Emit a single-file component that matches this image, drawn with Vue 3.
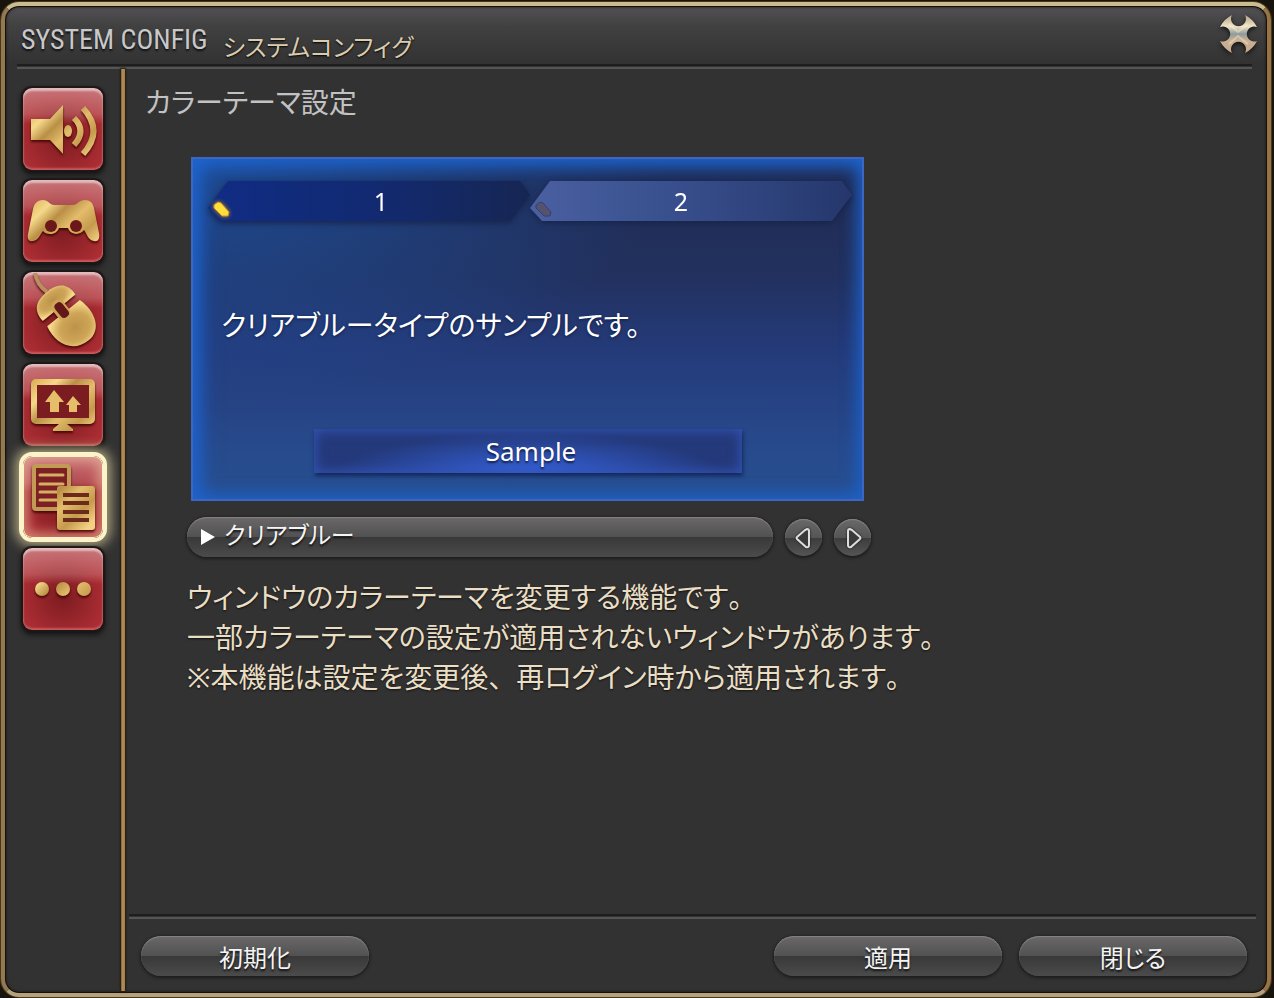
<template>
  <div class="screen">
    <main class="window">
      <header class="titlebar">
        <h1>SYSTEM CONFIG</h1>
        <p class="subtitle">システムコンフィグ</p>
        <button class="close" type="button" aria-label="閉じる">
          <svg viewBox="0 0 40 40" aria-hidden="true">
            <defs>
              <linearGradient id="steel" x1="0" y1="0" x2="0" y2="1">
                <stop offset="0" stop-color="#b5a28c" />
                <stop offset="0.3" stop-color="#efe3c4" />
                <stop offset="0.5" stop-color="#8f9a9c" />
                <stop offset="0.66" stop-color="#c9b094" />
                <stop offset="1" stop-color="#c8aa8c" />
              </linearGradient>
            </defs>
            <path
              fill="url(#steel)"
              d="M13 1 A7.5 7.5 0 1 0 26 1 Q34 5 38 13 A7.5 7.5 0 1 0 38 27 Q34 35 26 39 A7.5 7.5 0 1 0 13 39 Q5 35 1 27 A7.5 7.5 0 1 0 1 13 Q5 5 13 1Z"
            />
            <path d="M10 10L19 18L29 10M10 30L19 22L29 30" fill="none" stroke="#fff2d2" stroke-opacity="0.4" stroke-width="2" />
          </svg>
        </button>
      </header>
      <div class="rule"></div>

      <div class="body">
        <nav class="sidebar">
          <button
            v-for="item in menu"
            :key="item.id"
            type="button"
            class="menu-button"
            :class="{ active: item.id === current }"
            :aria-label="item.label"
            @click="current = item.id"
          >
            <svg class="icon" viewBox="0 0 80 82" aria-hidden="true">
              <defs>
                <linearGradient :id="'gold-' + item.id" gradientUnits="userSpaceOnUse" x1="10" y1="12" x2="66" y2="70">
                  <stop offset="0" stop-color="#d9a94f" />
                  <stop offset="0.25" stop-color="#f5d98a" />
                  <stop offset="0.42" stop-color="#b98f45" />
                  <stop offset="0.6" stop-color="#e3bd6c" />
                  <stop offset="0.8" stop-color="#c59a4c" />
                  <stop offset="1" stop-color="#f3d184" />
                </linearGradient>
                <radialGradient id="shell" cx="0.5" cy="0.5" r="0.6">
                  <stop offset="0" stop-color="#bb9248" />
                  <stop offset="0.6" stop-color="#cfa658" />
                  <stop offset="1" stop-color="#f6d98a" />
                </radialGradient>
              </defs>

              <g v-if="item.id === 'sound'" :fill="gold(item)">
                <path d="M8 31H27L40 17V66L27 52H8Z" />
                <ellipse cx="45" cy="43" rx="4" ry="6" />
                <g fill="none" :stroke="gold(item)" stroke-width="6">
                  <path d="M51 30Q64 43 51 57" />
                  <path d="M60 20Q81 43 60 66" />
                </g>
              </g>

              <g v-else-if="item.id === 'pad'">
                <path
                  :fill="gold(item)"
                  d="M20 20C25 20 27 25 31 25H50C54 25 56 20 62 20C67 20 70 23 71 28L76 53C77 59 75 62 71 61C65 60 64 54 61 50C58 55 48 56 45 48H36C33 56 23 55 20 51C17 54 16 60 10 61C6 62 4 59 5 54L10 29C11 24 14 20 20 20Z"
                />
                <circle cx="28" cy="46" r="6" fill="#6c1719" />
                <circle cx="53" cy="46" r="6" fill="#6c1719" />
              </g>

              <g v-else-if="item.id === 'mouse'">
                <path d="M12 1Q14 13 24 20" fill="none" stroke="#ba8f62" stroke-width="4" />
                <g transform="translate(38 38) rotate(-39)">
                  <path d="M-21 -3C-22 -18 -13 -23 0 -23S22 -18 21 -3Z" fill="url(#shell)" />
                  <path d="M-21 4H21C26 22 20 41 2 41C-18 41 -26 22 -21 4Z" fill="url(#shell)" />
                  <rect x="-7" y="-11" width="14" height="22" rx="7" fill="#cfa658" />
                  <rect x="-4" y="-8" width="9" height="17" rx="4" fill="#631718" />
                </g>
              </g>

              <g v-else-if="item.id === 'display'">
                <rect x="11" y="18" width="58" height="39" rx="2" fill="#7b1d20" :stroke="gold(item)" stroke-width="6" />
                <path d="M36 60H44L50 65V67H30V65Z" :fill="gold(item)" />
                <path d="M31 26L41 38H36V48H27V38H22Z" fill="#e6be6a" />
                <path d="M50 32L58 41H54V48H46V41H43Z" fill="#e6be6a" />
              </g>

              <g v-else-if="item.id === 'theme'">
                <rect x="11" y="10" width="35" height="43" rx="2" fill="#7d2023" stroke="#c39a55" stroke-width="4" />
                <path d="M17 19H40M17 28H40M17 36H40M17 44H40" fill="none" stroke="#d6ae64" stroke-width="3" stroke-linecap="round" />
                <rect x="34" y="30" width="38" height="44" rx="3" :fill="gold(item)" />
                <path d="M40 39H66M40 47H66M40 56H66M40 64H66" stroke="#6b2a1c" stroke-width="4" />
              </g>

              <g v-else :fill="gold(item)">
                <circle cx="19" cy="41" r="7" />
                <circle cx="40" cy="41" r="7" />
                <circle cx="61" cy="41" r="7" />
              </g>
            </svg>
          </button>
        </nav>

        <div class="divider"></div>

        <div class="content">
          <section class="settings">
            <h2>カラーテーマ設定</h2>

            <div class="theme">
              <div class="preview">
                <div class="tabs">
                  <button
                    v-for="n in 2"
                    :key="n"
                    type="button"
                    class="tab"
                    :class="{ selected: n === tab }"
                    @click="tab = n"
                  >
                    <span class="tab-face">{{ n }}</span>
                    <svg class="gem" viewBox="0 0 20 18" aria-hidden="true">
                      <path d="M2 5L6 2L9 3L17 12L16 16H10L2 8Z" />
                    </svg>
                  </button>
                </div>
                <p class="message">クリアブルータイプのサンプルです。</p>
                <button class="sample" type="button">Sample</button>
              </div>

              <div class="chooser">
                <label class="picker">
                  <svg viewBox="0 0 16 18" aria-hidden="true"><path d="M1 1L15 9L1 17Z" fill="#fff" /></svg>
                  <select v-model="theme" aria-label="カラーテーマ">
                    <option>クリアブルー</option>
                  </select>
                </label>
                <button class="step" type="button" aria-label="前へ">
                  <svg viewBox="0 0 37 37" aria-hidden="true"><path d="M22 10Q24 10 24 12V26Q24 29 21 28L12 20Q11 19 12 18L20 11Z" /></svg>
                </button>
                <button class="step" type="button" aria-label="次へ">
                  <svg viewBox="0 0 37 37" aria-hidden="true"><path d="M16 10Q14 10 14 12V26Q14 29 17 28L26 20Q27 19 26 18L18 11Z" /></svg>
                </button>
              </div>

              <p class="note">
                ウィンドウのカラーテーマを変更する機能です<span class="mark">。</span><br />
                一部カラーテーマの設定が適用されないウィンドウがあります<span class="mark">。</span><br />
                ※本機能は設定を変更後<span class="mark">、</span>再ログイン時から適用されます<span class="mark">。</span>
              </p>
            </div>
          </section>

          <footer>
            <div class="rule"></div>
            <div class="actions">
              <button type="button" class="pill reset">初期化</button>
              <button type="button" class="pill">適用</button>
              <button type="button" class="pill">閉じる</button>
            </div>
          </footer>
        </div>
      </div>
    </main>
  </div>
</template>

<script setup>
import { ref } from 'vue';

const menu = [
  { id: 'sound', label: 'サウンド設定' },
  { id: 'pad', label: 'ゲームパッド設定' },
  { id: 'mouse', label: 'マウス設定' },
  { id: 'display', label: 'ディスプレイ設定' },
  { id: 'theme', label: 'カラーテーマ設定' },
  { id: 'other', label: 'その他' },
];

const current = ref('theme');
const tab = ref(1);
const theme = ref('クリアブルー');

function gold(item) {
  return `url(#gold-${item.id})`;
}
</script>

<style>
body {
  background: #17130d;
}
</style>

<style scoped>
.screen {
  box-sizing: border-box;
  display: flex;
  min-height: 100vh;
  padding: 2px 3px 1px 1px;
  font-family: "Noto Sans", "Noto Sans CJK JP", sans-serif;
  font-feature-settings: "palt";
}

h1,
h2,
p {
  margin: 0;
  font-weight: 400;
}

button,
select {
  padding: 0;
  border: 0;
  background: none;
  color: inherit;
  font: inherit;
  font-feature-settings: inherit;
  cursor: pointer;
}

.window {
  flex: 1;
  display: flex;
  flex-direction: column;
  border: 4px solid;
  border-color: #c9bd90 #957548 #b3a27d #8f7a54;
  border-radius: 18px;
  background: linear-gradient(#525254, #414142 20px, #323232 58px);
  box-shadow: inset 0 0 0 1px #1c0d06, inset 0 0 3px 1px #1c1410, 0 0 0 1px #4b3417;
}

.rule {
  height: 1px;
  margin: 0 15px 0 12px;
  border-top: 2px solid #1e1e1e;
  border-bottom: 2px solid #555;
  background: #333;
}

/* title bar */
.titlebar {
  display: flex;
  align-items: flex-end;
  gap: 15px;
  height: 58px;
  padding: 0 8px 0 16px;
}

h1 {
  color: #c8c8c8;
  font-family: "Liberation Sans Narrow", "Roboto Condensed", "DejaVu Sans Condensed", sans-serif;
  font-size: 28px;
  line-height: 48px;
  text-shadow: 0 2px 2px #111;
}

.subtitle {
  color: #dcccae;
  font-size: 24px;
  line-height: 34px;
  text-shadow: 0 1px 2px #000;
}

.close {
  align-self: flex-start;
  width: 40px;
  height: 40px;
  margin: 8px 0 0 auto;
}

.close svg {
  display: block;
  filter: drop-shadow(0 2px 2px #111);
}

.body {
  flex: 1;
  display: flex;
}

/* left menu */
.sidebar {
  display: flex;
  flex-direction: column;
  gap: 10px;
  padding: 19px 18px 18px 18px;
}

.menu-button {
  width: 80px;
  height: 82px;
  border-radius: 9px;
  background:
    linear-gradient(rgba(255, 240, 240, 0.35), rgba(255, 220, 220, 0.22) 26px, transparent 36px),
    radial-gradient(circle at 50% 60%, #7c1c20, #a92c32 65%, #a83c40);
  box-shadow:
    inset 0 3px 2px rgba(255, 255, 255, 0.5),
    inset 0 -2px 2px rgba(230, 140, 140, 0.5),
    0 0 1px 2px #1d1717,
    0 3px 5px 2px #151515;
}

.menu-button.active {
  box-shadow:
    inset 0 0 0 1px #fdf3c8,
    inset 0 0 12px 5px rgba(240, 190, 160, 0.6),
    0 0 0 4px #fdf3c8,
    0 0 12px 8px #aaa17c;
}

.icon {
  display: block;
  filter: drop-shadow(0 2px 1px rgba(60, 0, 0, 0.8));
}

.divider {
  width: 4px;
  margin-bottom: 2px;
  background: linear-gradient(90deg, #7c5a30, #b48f56 40%, #a47d46);
  box-shadow: 0 0 2px 1px #241c14;
}

.content {
  flex: 1;
  display: flex;
  flex-direction: column;
}

.settings {
  flex: 1;
  padding: 13px 20px;
}

h2 {
  color: #c2c2c2;
  font-size: 28px;
  line-height: 40px;
}

.theme {
  padding: 35px 0 0 42px;
}

/* theme preview */
.preview {
  box-sizing: border-box;
  display: flex;
  flex-direction: column;
  max-width: 673px;
  margin-left: 4px;
  padding: 22px 10px 26px 15px;
  border: 2px solid #3d66c4;
  background:
    radial-gradient(ellipse at 0 0, rgba(28, 96, 190, 0.6), transparent 50%),
    linear-gradient(#202a50, #22315f 35%, #243a78 55%, #274a8c 85%, #28508f);
  box-shadow: inset 4px 4px 22px 1px #1e66d0, inset 0 0 18px 1px #1d5cc0;
}

.tabs {
  display: flex;
}

.tab {
  position: relative;
  flex: 1;
  color: #fff;
  font-size: 25px;
  line-height: 40px;
  filter: drop-shadow(0 2px 3px #16234a);
}

.tab-face {
  display: block;
  padding-right: 20px;
  background: linear-gradient(90deg, #4a60a0, #3a5190 40%, #25376c);
  clip-path: polygon(20px 0, calc(100% - 10px) 0, 100% 14px, calc(100% - 20px) 100%, 12px 100%, 0 27px);
}

.tab.selected .tab-face {
  padding-right: 0;
  padding-left: 24px;
  background: linear-gradient(90deg, #102c84, #122a72 50%, #162653);
}

.gem {
  position: absolute;
  bottom: 3px;
  left: 4px;
  width: 20px;
  height: 18px;
  fill: #555270;
  stroke: #35406c;
}

.tab.selected .gem {
  fill: #ffdf3c;
  stroke: #d18e20;
  filter: drop-shadow(0 0 2px #c08a20);
}

.message {
  margin: 84px 13px;
  color: #fff;
  font-size: 28px;
  line-height: 40px;
  text-shadow: 0 1px 3px #101c44;
}

.sample {
  align-self: center;
  width: 428px;
  max-width: 100%;
  margin-right: 4px;
  padding-left: 6px;
  background:
    radial-gradient(ellipse at 50% 110%, rgba(56, 104, 235, 0.95), transparent 65%),
    #24397a;
  box-shadow: inset 0 0 12px 2px #3152b0, 1px 3px 4px #14285c;
  color: #fff;
  font-size: 26px;
  line-height: 44px;
  text-shadow: 0 2px 2px #14204c;
}

/* theme chooser */
.chooser {
  display: flex;
  align-items: center;
  gap: 12px;
  max-width: 684px;
  margin-top: 16px;
}

.picker,
.pill {
  border-radius: 20px;
  background: linear-gradient(#6a6869, #525152 50%, #3a393a 51%, #4c4b4c);
  box-shadow: inset 0 1px 1px #858585, 0 1px 3px 1px #1c1c1c;
  color: #f4f4f4;
  text-shadow: 0 2px 2px #111;
}

.picker {
  flex: 1;
  display: flex;
  align-items: center;
  gap: 8px;
  height: 40px;
  padding: 0 14px 0 13px;
}

.picker svg {
  width: 16px;
  height: 18px;
}

.picker select {
  flex: 1;
  min-width: 0;
  height: 40px;
  padding-bottom: 4px;
  appearance: none;
  font-size: 24px;
  line-height: 36px;
  text-shadow: inherit;
}

.step {
  width: 37px;
  height: 37px;
  border-radius: 50%;
  background: linear-gradient(#6a6869, #555 50%, #3c3c3c 51%, #555);
  box-shadow: inset 0 1px 1px #858585, 0 1px 3px 1px #1c1c1c;
}

.step svg {
  display: block;
  fill: #3a3a3a;
  stroke: #dedede;
  stroke-width: 2;
  filter: drop-shadow(0 0 1px #111);
}

.note {
  margin-top: 20px;
  color: #eadfc4;
  font-size: 28px;
  line-height: 40px;
  text-shadow: 0 1px 2px #111;
}

/* punctuation keeps its full-width box */
.mark {
  font-feature-settings: normal;
}

/* bottom buttons */
footer .rule {
  margin: 0 11px 0 4px;
}

.actions {
  display: flex;
  gap: 17px;
  padding: 17px 20px 17px 16px;
}

.pill {
  width: 228px;
  height: 40px;
  font-size: 24px;
}

.reset {
  margin-right: auto;
}
</style>
